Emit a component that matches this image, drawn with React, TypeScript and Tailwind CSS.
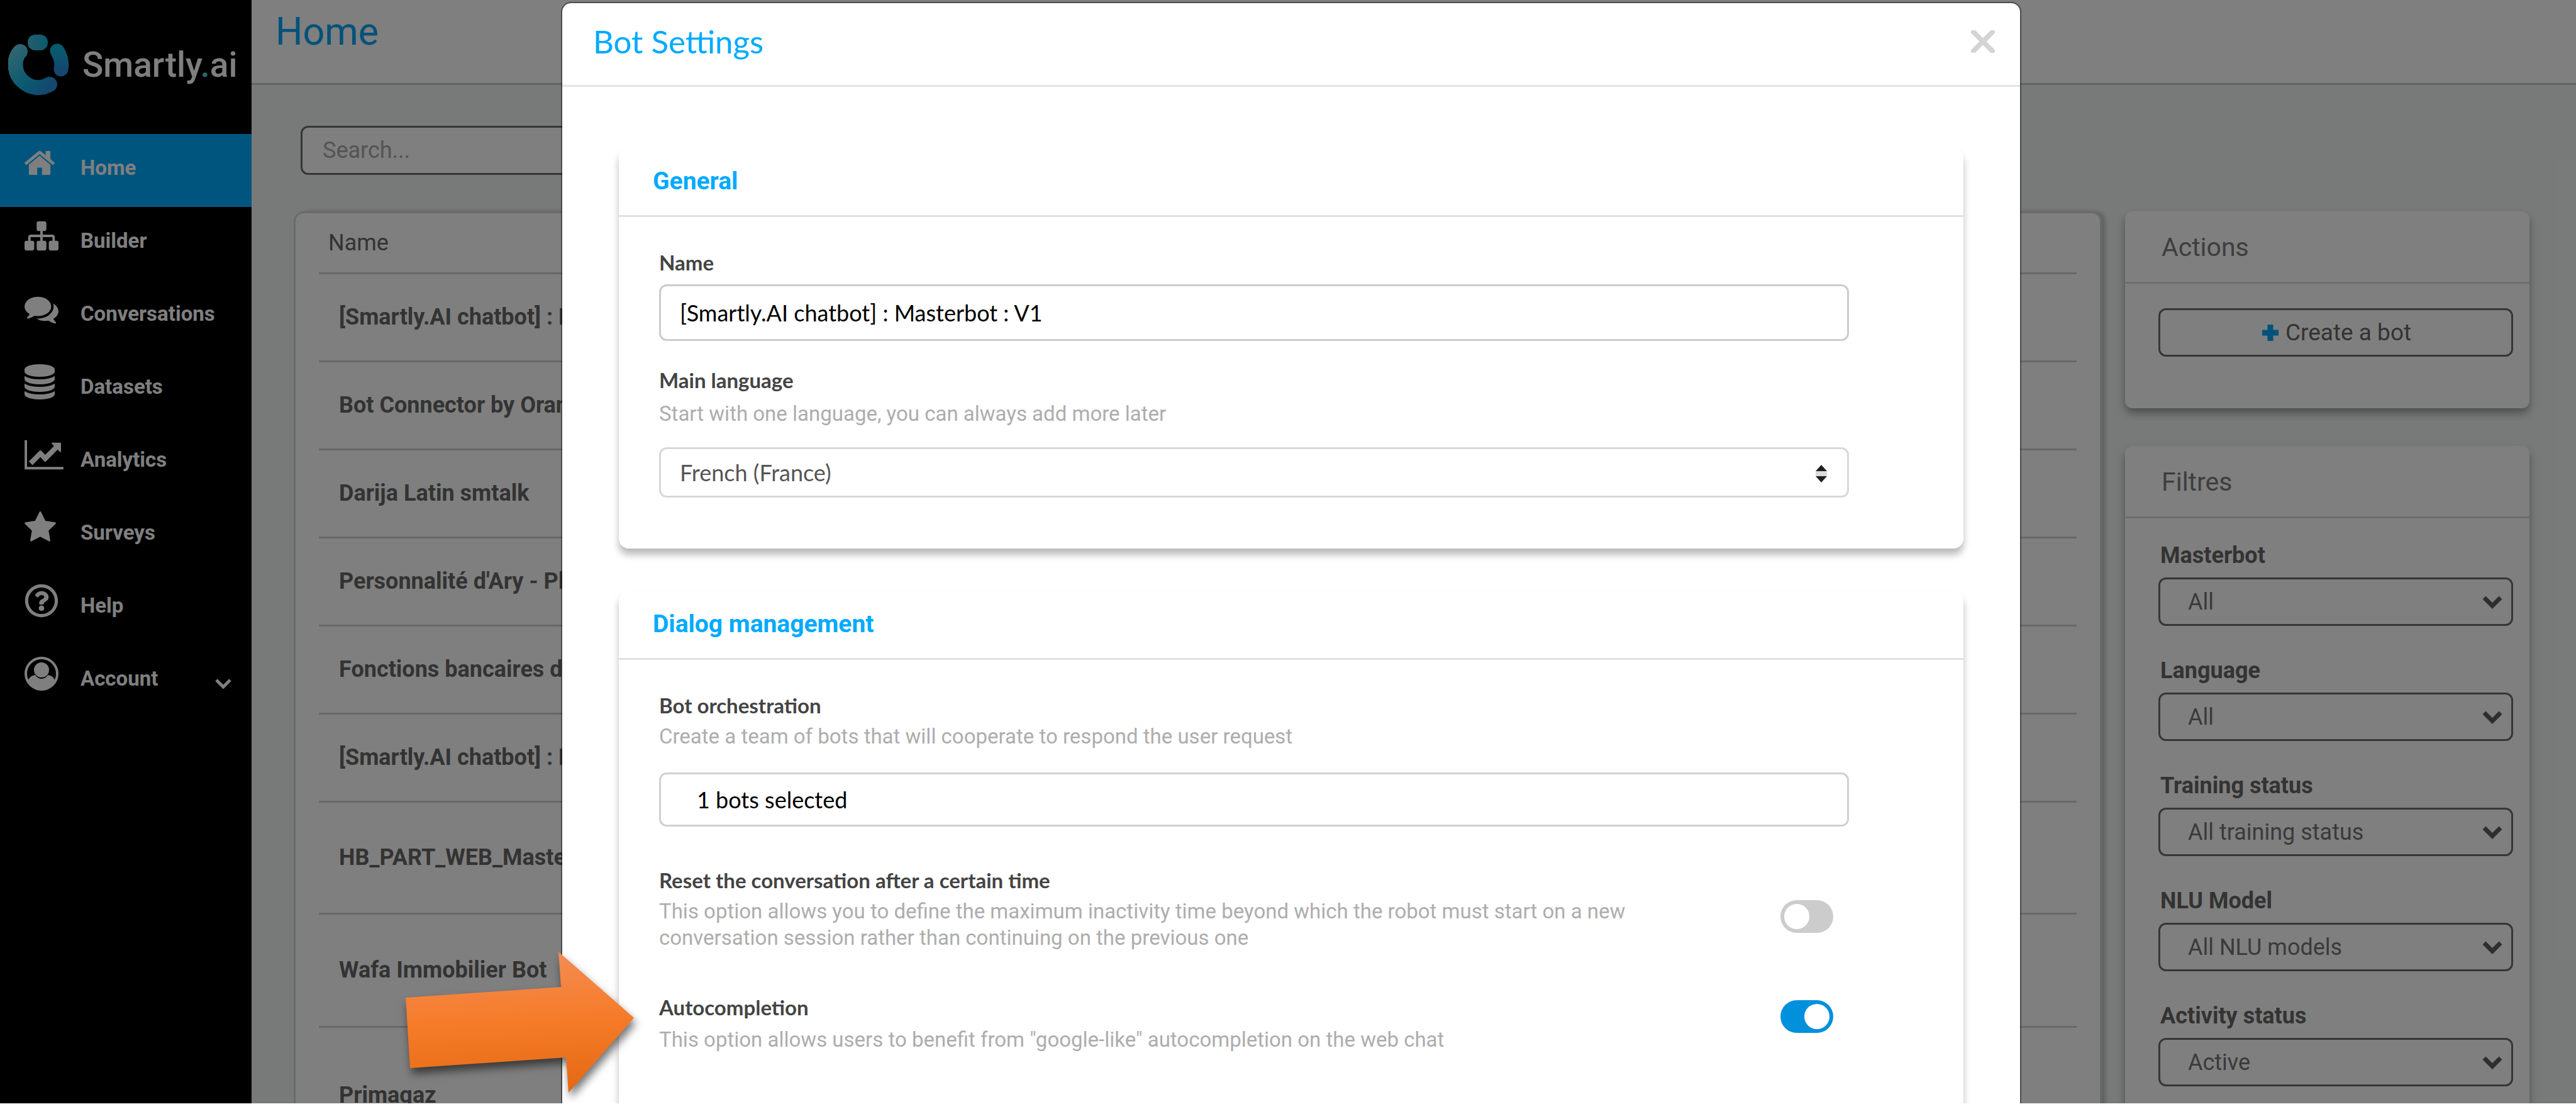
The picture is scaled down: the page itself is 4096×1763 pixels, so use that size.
import { ReactNode } from "react";
import { FaRegQuestionCircle } from "react-icons/fa";

interface NavItem {
  name: string;
  icon: ReactNode;
  active?: boolean;
  expandable?: boolean;
}

interface BotRow {
  name: string;
  height: string;
}

const HomeIcon = () => (
  <svg viewBox="89 0 1614 1792" className="h-[54px] w-[48px]" fill="currentColor">
    <path d="M1472 992v480q0 26-19 45t-45 19h-384v-384h-256v384h-384q-26 0-45-19t-19-45v-480q0-1 .5-3t.5-3l575-474 575 474q1 2 1 6zm223-69l-62 74q-8 9-21 11h-3q-13 0-21-7l-692-577-692 577q-12 8-24 7-13-2-21-11l-62-74q-8-10-7-23.5t11-21.5l719-599q32-26 76-26t76 26l244 204v-195q0-14 9-23t23-9h192q14 0 23 9t9 23v408l219 182q10 8 11 21.5t-7 23.5z" />
  </svg>
);

const SitemapIcon = () => (
  <svg viewBox="0 0 1792 1792" className="h-[54px] w-[54px]" fill="currentColor">
    <path d="M1792 1248v320q0 40-28 68t-68 28h-320q-40 0-68-28t-28-68v-320q0-40 28-68t68-28h96v-192h-512v192h96q40 0 68 28t28 68v320q0 40-28 68t-68 28h-320q-40 0-68-28t-28-68v-320q0-40 28-68t68-28h96v-192h-512v192h96q40 0 68 28t28 68v320q0 40-28 68t-68 28h-320q-40 0-68-28t-28-68v-320q0-40 28-68t68-28h96v-192q0-52 38-90t90-38h512v-192h-96q-40 0-68-28t-28-68v-320q0-40 28-68t68-28h320q40 0 68 28t28 68v320q0 40-28 68t-68 28h-96v192h512q52 0 90 38t38 90v192h96q40 0 68 28t28 68z" />
  </svg>
);

const CommentsIcon = () => (
  <svg viewBox="0 0 1792 1792" className="h-[54px] w-[54px]" fill="currentColor">
    <path d="M1408 768q0 139-94 257t-256.5 186.5-353.5 68.5q-86 0-176-16-124 88-278 128-36 9-86 16h-3q-11 0-20.5-8t-11.5-21q-1-3-1-6.5t.5-6.5 2-6l2.5-5 3.5-5.5 4-5 4.5-5 4-4.5q5-6 23-25t26-29.5 22.5-29 25-38.5 20.5-44q-124-72-195-177t-71-224q0-139 94-257t256.5-186.5 353.5-68.5 353.5 68.5 256.5 186.5 94 257zm384 256q0 120-71 224.5t-195 176.5q10 24 20.5 44t25 38.5 22.5 29 26 29.5 23 25q1 1 4 4.5t4.5 5 4 5 3.5 5.5l2.5 5 2 6 .5 6.5-1 6.5q-3 14-13 22t-22 7q-50-7-86-16-154-40-278-128-90 16-176 16-271 0-472-132 58 4 88 4 161 0 309-45t264-129q125-92 192-212t67-254q0-77-23-152 129 71 204 178t75 230z" />
  </svg>
);

const DatabaseIcon = () => (
  <svg viewBox="128 0 1536 1792" className="h-[56px] w-[48px]" fill="currentColor">
    <path d="M896 768q237 0 443-43t325-127v170q0 69-103 128t-280 93.5-385 34.5-385-34.5-280-93.5-103-128v-170q119 84 325 127t443 43zm0 768q237 0 443-43t325-127v170q0 69-103 128t-280 93.5-385 34.5-385-34.5-280-93.5-103-128v-170q119 84 325 127t443 43zm0-384q237 0 443-43t325-127v170q0 69-103 128t-280 93.5-385 34.5-385-34.5-280-93.5-103-128v-170q119 84 325 127t443 43zm0-1152q208 0 385 34.5t280 93.5 103 128v128q0 69-103 128t-280 93.5-385 34.5-385-34.5-280-93.5-103-128v-128q0-69 103-128t280-93.5 385-34.5z" />
  </svg>
);

const ChartIcon = () => (
  <svg viewBox="0 0 2048 1792" className="h-[54px] w-[62px]" fill="currentColor">
    <path d="M2048 1536v128h-2048v-1536h128v1408h1920zm-128-1248v435q0 21-19.5 29.5t-35.5-7.5l-121-121-633 633q-10 10-23 10t-23-10l-233-233-416 416-192-192 585-585q10-10 23-10t23 10l233 233 464-464-121-121q-16-16-7.5-35.5t29.5-19.5h435q14 0 23 9t9 23z" />
  </svg>
);

const StarIcon = () => (
  <svg viewBox="64 0 1664 1792" className="h-[54px] w-[50px]" fill="currentColor">
    <path d="M1728 647q0 22-26 48l-363 354 86 500q1 7 1 20 0 21-10.5 35.5t-30.5 14.5q-19 0-40-12l-449-236-449 236q-22 12-40 12-21 0-31.5-14.5t-10.5-35.5q0-6 2-20l86-500-364-354q-25-27-25-48 0-37 56-46l502-73 225-455q19-41 49-41t49 41l225 455 502 73q56 9 56 46z" />
  </svg>
);

const UserIcon = () => (
  <svg viewBox="0 0 54 54" className="h-[54px] w-[54px]">
    <circle cx="27" cy="27" r="25" fill="none" stroke="currentColor" strokeWidth="4" />
    <circle cx="27" cy="21" r="12" fill="currentColor" />
    <path d="M5 39q3-9 12-10 4 6 10 6t10-6q9 1 12 10A25 25 0 0 1 5 39z" fill="currentColor" />
  </svg>
);

const navItems: NavItem[] = [
  { name: "Home", icon: <HomeIcon />, active: true },
  { name: "Builder", icon: <SitemapIcon /> },
  { name: "Conversations", icon: <CommentsIcon /> },
  { name: "Datasets", icon: <DatabaseIcon /> },
  { name: "Analytics", icon: <ChartIcon /> },
  { name: "Surveys", icon: <StarIcon /> },
  { name: "Help", icon: <FaRegQuestionCircle size={54} /> },
  { name: "Account", icon: <UserIcon />, expandable: true },
];

const bots: BotRow[] = [
  { name: "[Smartly.AI chatbot] : Masterbot", height: "h-[140px]" },
  { name: "Bot Connector by Orange", height: "h-[140px]" },
  { name: "Darija Latin smtalk", height: "h-[140px]" },
  { name: "Personnalité d'Ary - Pl", height: "h-[140px]" },
  { name: "Fonctions bancaires de", height: "h-[140px]" },
  { name: "[Smartly.AI chatbot] : Masterbot", height: "h-[140px]" },
  { name: "HB_PART_WEB_Master", height: "h-[178px]" },
  { name: "Wafa Immobilier Bot", height: "h-[180px]" },
  { name: "Primagaz", height: "h-[218px]" },
];

const filters = [
  { label: "Masterbot", value: "All" },
  { label: "Language", value: "All" },
  { label: "Training status", value: "All training status" },
  { label: "NLU Model", value: "All NLU models" },
  { label: "Activity status", value: "Active" },
];

function Logo() {
  return (
    <div className="flex h-[213px] items-center gap-[21px] pb-[6px] pl-[13px]">
      <svg viewBox="0 0 97 97" className="h-[97px] w-[97px]" fill="none">
        <defs>
          <linearGradient id="logo-ring" x1="0" y1="0" x2="1" y2="1">
            <stop offset="0" stopColor="#5ec8e0" />
            <stop offset="0.6" stopColor="#10b4e0" />
            <stop offset="1" stopColor="#2890dc" />
          </linearGradient>
          <linearGradient id="logo-side" x1="0" y1="0" x2="0" y2="1">
            <stop offset="0" stopColor="#10b4dc" />
            <stop offset="1" stopColor="#2890dc" />
          </linearGradient>
          <linearGradient id="logo-head" x1="0" y1="0" x2="1" y2="0">
            <stop offset="0" stopColor="#46bed8" />
            <stop offset="1" stopColor="#14b4dc" />
          </linearGradient>
        </defs>
        <rect x="31" y="0" width="32" height="25" rx="12" fill="url(#logo-head)" />
        <path d="M19 27C8 38 9 62 23 74C36 86 52 87 66 79" stroke="url(#logo-ring)" strokeWidth="24" strokeLinecap="round" />
        <path d="M78 26Q87 40 84 55" stroke="url(#logo-side)" strokeWidth="23" strokeLinecap="round" />
      </svg>
      <span className="text-[55px] leading-none font-medium text-white">
        Smartly<span className="text-[#4fd0e0]">.</span>ai
      </span>
    </div>
  );
}

function Sidebar() {
  return (
    <aside className="w-[400px] shrink-0 bg-black text-white">
      <Logo />
      <nav>
        {navItems.map((item) => (
          <a
            key={item.name}
            href="#"
            className={`flex h-[116px] items-center pb-2 pl-[39px] ${item.active ? "bg-[#00aaff]" : ""}`}
          >
            <span className="mb-4 w-[89px]">{item.icon}</span>
            <span className="flex-1 text-[33px] font-bold">{item.name}</span>
            {item.expandable && (
              <svg viewBox="0 0 26 16" className="mt-4 mr-[32px] h-[16px] w-[26px]" fill="none">
                <path d="M2 2l11 11L24 2" stroke="currentColor" strokeWidth="5" />
              </svg>
            )}
          </a>
        ))}
      </nav>
    </aside>
  );
}

function BotTable() {
  return (
    <div className="min-w-0 flex-1 rounded-t-2xl border-[3px] border-[#d4d4d4] bg-white px-[37px] shadow-[6px_0_6px_rgba(0,0,0,0.2)]">
      <table className="w-full table-fixed">
        <thead>
          <tr className="h-[95px] border-b-[3px] border-[#d0d0d0]">
            <th className="pl-[15px] text-left text-[36px] font-normal text-[#666]">Name</th>
          </tr>
        </thead>
        <tbody>
          {bots.map((bot, idx) => (
            <tr key={idx} className={`border-b-[3px] border-[#d0d0d0] ${bot.height}`}>
              <td className="pl-[32px] text-[36px] font-bold whitespace-nowrap text-[#666]">{bot.name}</td>
            </tr>
          ))}
        </tbody>
      </table>
    </div>
  );
}

function SideCard({ title, children }: { title: string; children: ReactNode }) {
  return (
    <section className="rounded-xl bg-white shadow-[0_8px_14px_rgba(0,0,0,0.35)]">
      <h2 className="flex h-[115px] items-center border-b-[3px] border-[#dcdcdc] pt-[4px] pl-[58px] text-[41px] text-[#7c7c7c]">
        {title}
      </h2>
      <div className="pr-[26px] pl-[53px]">{children}</div>
    </section>
  );
}

function FilterSelect({ label, value }: { label: string; value: string }) {
  const id = label.toLowerCase().replace(" ", "-");
  return (
    <div>
      <label htmlFor={id} className="mb-3 block pl-[3px] text-[36px] leading-[46px] font-bold text-[#666]">
        {label}
      </label>
      <div className="relative">
        <select
          id={id}
          className="h-[77px] w-full appearance-none rounded-xl border-[3px] border-[#6c6c6c] bg-white pl-[44px] text-[36px] text-[#757575]"
        >
          <option>{value}</option>
        </select>
        <svg viewBox="0 0 32 22" className="absolute top-[29px] right-[17px] h-[22px] w-[32px]" fill="none">
          <path d="M3 3l13 13L29 3" stroke="#5c5c5c" strokeWidth="7" />
        </svg>
      </div>
    </div>
  );
}

function HomePage() {
  return (
    <main className="flex min-w-0 flex-1 flex-col bg-[#f1f4f3]">
      <header className="h-[135px] shrink-0 border-b-[3px] border-[#c8c8c8] bg-white pt-[15px] pl-[38px]">
        <h1 className="text-[61px] leading-[70px] text-[#00a4f5]">Home</h1>
      </header>
      <div className="flex flex-col gap-[58px] pt-[65px] pr-[74px] pl-[67px]">
        <input
          type="text"
          aria-label="Search"
          placeholder="Search..."
          className="ml-[11px] h-[78px] w-[1100px] rounded-xl border-[3px] border-[#6c6c6c] bg-white px-[32px] text-[36px] placeholder:text-[#a8a8a8]"
        />
        <div className="flex gap-[37px]">
          <BotTable />
          <div className="flex w-[643px] shrink-0 flex-col gap-[60px]">
            <SideCard title="Actions">
              <div className="pt-[39px] pb-[82px]">
                <button className="flex h-[77px] w-full items-center justify-center gap-2 rounded-xl border-[3px] border-[#6c6c6c] text-[37px] text-[#666]">
                  <svg viewBox="0 0 32 32" className="h-[32px] w-[32px]" fill="none">
                    <path d="M16 3v26M3 16h26" stroke="#00a4f5" strokeWidth="9" />
                  </svg>
                  Create a bot
                </button>
              </div>
            </SideCard>
            <SideCard title="Filtres">
              <div className="flex flex-col gap-[48px] pt-[36px] pb-[80px]">
                {filters.map((filter) => (
                  <FilterSelect key={filter.label} label={filter.label} value={filter.value} />
                ))}
              </div>
            </SideCard>
          </div>
        </div>
      </div>
    </main>
  );
}

function ModalCard({ title, children }: { title: string; children: ReactNode }) {
  return (
    <section className="rounded-2xl bg-white shadow-[0_10px_12px_rgba(0,0,0,0.27)]">
      <h3 className="flex h-[110px] items-center border-b-[3px] border-[#e0e0e0] pl-[54px] text-[39px] font-bold text-[#00aaff]">
        {title}
      </h3>
      <div className="pt-[49px] pr-[182px] pb-[81px] pl-[64px]">{children}</div>
    </section>
  );
}

const labelClass = "block text-[33px] leading-[46px] font-bold font-['Lato',sans-serif] text-[#444]";
const hintClass = "text-[33px] leading-[42px] text-[#adadad]";

function Toggle({ id, on, className }: { id: string; on?: boolean; className: string }) {
  return (
    <input
      id={id}
      type="checkbox"
      role="switch"
      defaultChecked={on}
      className={`h-[52px] w-[84px] shrink-0 appearance-none rounded-full bg-[#ccc] p-[6px] before:block before:size-[40px] before:rounded-full before:bg-white checked:bg-[#0090dc] checked:before:ml-auto ${className}`}
    />
  );
}

function BotSettings() {
  return (
    <div
      role="dialog"
      aria-label="Bot Settings"
      className="w-[2322px] rounded-t-2xl border-2 border-black/40 bg-white bg-clip-padding"
    >
      <div className="flex h-[133px] items-center justify-between border-b-[3px] border-[#e5e5e5] pr-[39px] pb-[8px] pl-[49px]">
        <h2 className="font-['Lato',sans-serif] text-[51px] text-[#00aaff]">Bot Settings</h2>
        <button aria-label="Close">
          <svg viewBox="0 0 40 36" className="h-[36px] w-[40px]" fill="none">
            <path d="M5 3l30 30M35 3L5 33" stroke="#d4d4d4" strokeWidth="8" strokeLinecap="round" />
          </svg>
        </button>
      </div>

      <div className="flex flex-col gap-[67px] px-[90px] pt-[97px]">
        <ModalCard title="General">
          <label htmlFor="bot-name" className={labelClass}>Name</label>
          <input
            id="bot-name"
            type="text"
            defaultValue="[Smartly.AI chatbot] : Masterbot : V1"
            className="mt-3 h-[90px] w-full rounded-xl border-[3px] border-[#ccc] px-[30px] font-['Lato',sans-serif] text-[36px] text-black"
          />
          <label htmlFor="bot-language" className={`mt-[39px] ${labelClass}`}>Main language</label>
          <p className={`mt-[10px] ${hintClass}`}>Start with one language, you can always add more later</p>
          <div className="relative mt-8">
            <select
              id="bot-language"
              className="h-[80px] w-full appearance-none rounded-xl border-[3px] border-[#d8d8d8] px-[30px] font-['Lato',sans-serif] text-[36px] text-[#555]"
            >
              <option>French (France)</option>
            </select>
            <svg viewBox="0 0 20 28" className="absolute top-[28px] right-[34px] h-[28px] w-[20px]">
              <path d="M1 10h18v8H1z" fill="#dcdcdc" />
              <path d="M10 0l9 10H1zM10 28L1 18h18z" fill="#202020" />
            </svg>
          </div>
        </ModalCard>

        <ModalCard title="Dialog management">
          <label htmlFor="bot-team" className={labelClass}>Bot orchestration</label>
          <p className={`mt-[6px] ${hintClass}`}>
            Create a team of bots that will cooperate to respond the user request
          </p>
          <button
            id="bot-team"
            className="mt-9 block h-[86px] w-full rounded-xl border-[3px] border-[#d0d0d0] px-[57px] text-left font-['Lato',sans-serif] text-[36px] text-black"
          >
            1 bots selected
          </button>

          <div className="mt-[62px] flex justify-between pr-[25px]">
            <div className="w-[1600px]">
              <label htmlFor="reset-conversation" className={labelClass}>
                Reset the conversation after a certain time
              </label>
              <p className={`mt-[6px] ${hintClass}`}>
                This option allows you to define the maximum inactivity time beyond which the robot must start on a new
                conversation session rather than continuing on the previous one
              </p>
            </div>
            <Toggle id="reset-conversation" className="mt-[55px]" />
          </div>

          <div className="mt-[66px] flex justify-between pr-[25px] pb-[60px]">
            <div className="w-[1600px]">
              <label htmlFor="autocompletion" className={labelClass}>Autocompletion</label>
              <p className={`mt-[8px] ${hintClass}`}>
                This option allows users to benefit from "google-like" autocompletion on the web chat
              </p>
            </div>
            <Toggle id="autocompletion" on className="mt-3" />
          </div>
        </ModalCard>
      </div>
    </div>
  );
}

// Callout pointing at the autocompletion switch
function CalloutArrow() {
  return (
    <svg
      viewBox="0 0 364 224"
      className="absolute top-[1513px] left-[644px] h-[224px] w-[364px] overflow-visible drop-shadow-[3px_9px_7px_rgba(0,0,0,0.55)]"
    >
      <defs>
        <linearGradient id="callout" x1="0.46" y1="0" x2="0.54" y2="1">
          <stop offset="0" stopColor="#f38c55" />
          <stop offset="0.5" stopColor="#f67b28" />
          <stop offset="1" stopColor="#e56914" />
        </linearGradient>
      </defs>
      <path d="M1 73L248 56L244 0L364 105L260 224L256 168L8 185z" fill="url(#callout)" />
    </svg>
  );
}

export default function App() {
  return (
    <div className="h-screen bg-white pb-[9px] font-['Roboto',sans-serif]">
      <div className="relative h-full overflow-hidden">
        <div className="flex h-full">
          <Sidebar />
          <HomePage />
        </div>
        <div className="absolute inset-0 flex items-start justify-center bg-black/50 pt-[3px] pl-[10px]">
          <BotSettings />
        </div>
        <CalloutArrow />
      </div>
    </div>
  );
}
